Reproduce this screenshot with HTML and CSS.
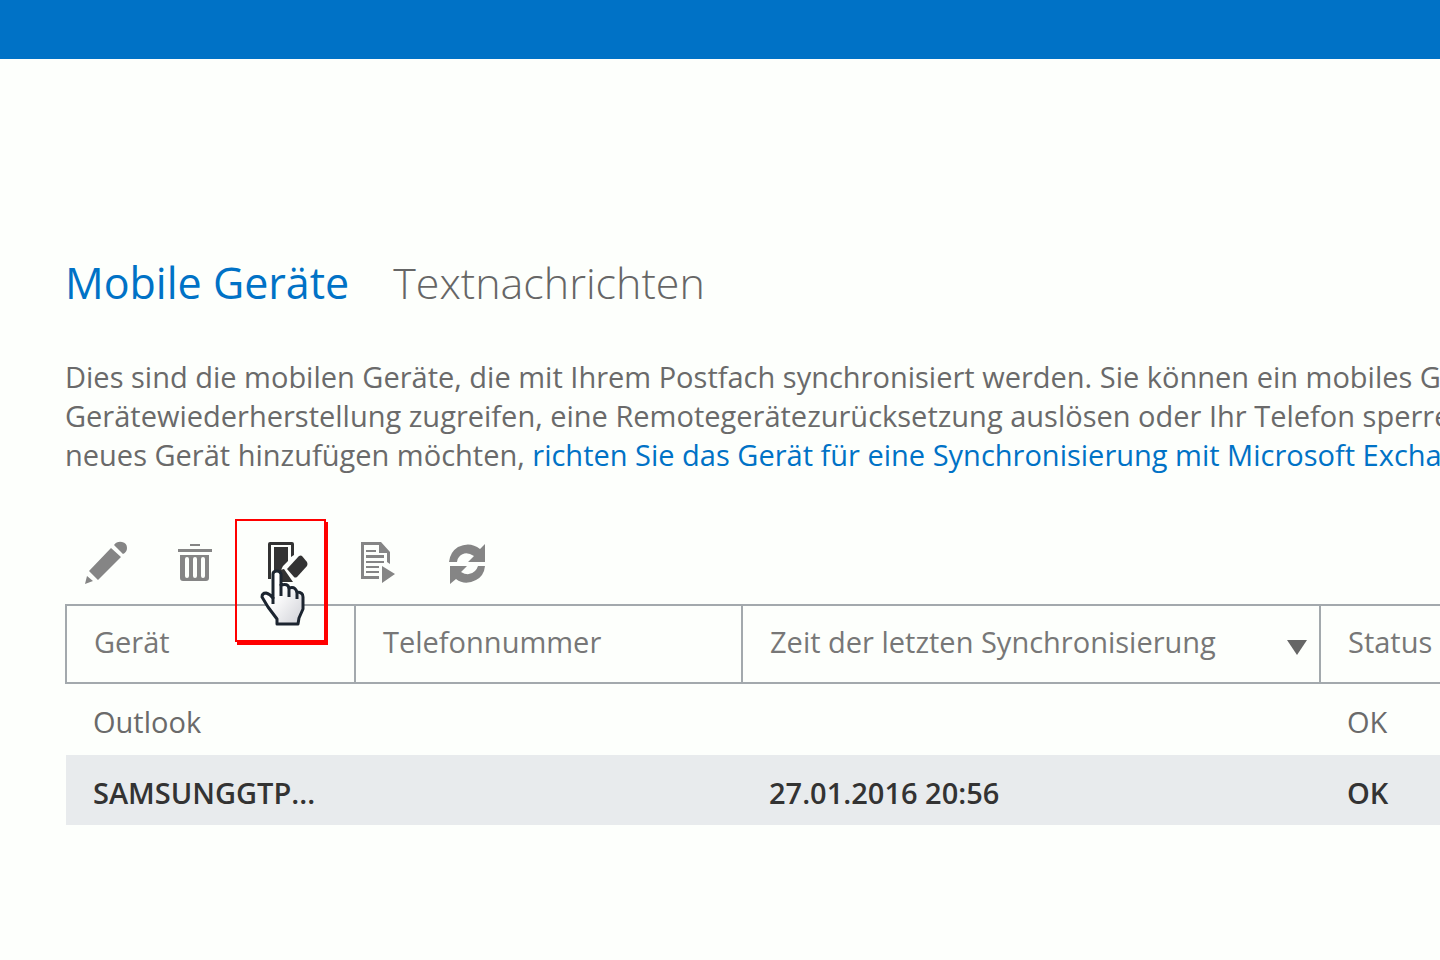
FILE: index.html
```html
<!DOCTYPE html>
<html lang="de">
  <head>
    <meta charset="UTF-8" />
    <meta name="viewport" content="width=device-width, initial-scale=1.0" />
    <title>Mobile Geräte</title>
    <link rel="stylesheet" href="styles.css">
  </head>
  <body>
    <header class="topbar"></header>

    <main class="content">
      <nav class="tabs">
        <a href="#" class="tab active">Mobile Geräte</a>
        <a href="#" class="tab">Textnachrichten</a>
      </nav>

      <p class="intro">
        Dies sind die mobilen Geräte, die mit Ihrem Postfach synchronisiert werden. Sie können ein mobiles G<br>
        Gerätewiederherstellung zugreifen, eine Remotegerätezurücksetzung auslösen oder Ihr Telefon sperren<br>
        neues Gerät hinzufügen möchten, <a href="#">richten Sie das Gerät für eine Synchronisierung mit Microsoft Excha</a>
      </p>

      <div class="toolbar">
        <button class="tool" aria-label="Bearbeiten">
          <svg viewBox="0 0 44 44">
            <path d="M27 7l10 9-23 23-9-9zM30 4q3-4 8-3 5 1 5 6 0 4-4 6zM3 35l6 5-8 3z" />
          </svg>
        </button>
        <button class="tool" aria-label="Löschen">
          <svg viewBox="0 0 44 44">
            <path d="M16 3h10v2H16zM4 8h34v3H4z" />
            <path fill-rule="evenodd" d="M6 14h29v23q0 3-3 3H9q-3 0-3-3zM13 16q-2 0-2 2v17q0 2 2 2t2-2V18q0-2-2-2zM21 16q-2 0-2 2v17q0 2 2 2t2-2V18q0-2-2-2zM29 16q-2 0-2 2v17q0 2 2 2t2-2V18q0-2-2-2z" />
          </svg>
        </button>
        <button class="tool wipe" aria-label="Gerät zurücksetzen">
          <svg viewBox="0 0 44 44">
            <path d="M6 1h22q2 0 2 2v11l-3 2V4H7v34H4V3q0-2 2-2zM10 6h14v14l-5 5-3 6h-6zM16 29l4-1 9 13H16z" />
            <path d="M35 15q2-1 3 0l5 6q1 2 0 4L33 36q-2 1-3 0l-7-8z" />
          </svg>
          <span class="marker"></span>
          <svg class="pointer" viewBox="0 0 46 58">
            <defs>
              <linearGradient id="hand" x1="0" y1="0" x2="1" y2="1">
                <stop offset="40%" stop-color="#fff" />
                <stop offset="100%" stop-color="#cfd0d6" />
              </linearGradient>
            </defs>
            <path fill="url(#hand)" stroke="#1c2530" stroke-width="3" stroke-linejoin="round" d="M13 29V5q0-3 4-3 3 0 4 3v11q7-2 8 3 6-2 8 4 6 0 6 5v12l-4 9-1 6H17v-5L8 38 2 28q0-4 4-4 4 1 7 5z" />
            <path fill="none" stroke="#1c2530" stroke-width="3" d="M21 15v12M29 18v10M37 22v8M13 28v7" />
          </svg>
        </button>
        <button class="tool" aria-label="Protokoll">
          <svg viewBox="0 0 44 44">
            <path fill-rule="evenodd" d="M7 1h20l9 10v12l-3-2v-9h-8V4H10v31h15v3H7z" />
            <path d="M12 9h10v2H12zM12 14h18v3H12zM12 20h18v2H12zM12 25h13v2H12zM12 30h13v2H12zM28 25l13 8-13 9z" />
          </svg>
        </button>
        <button class="tool" aria-label="Aktualisieren">
          <svg viewBox="0 0 44 44">
            <path d="M5 21Q6 11 14 6 26 0 36 8l5-5v18H24l6-6q-9-6-15 1-2 2-2 5zM41 25q-1 10-9 14-11 6-20-1l-6 5V25h17l-6 6q8 5 14-1 2-2 3-5z" />
          </svg>
        </button>
      </div>

      <table class="devices">
        <colgroup>
          <col class="col-device">
          <col class="col-phone">
          <col class="col-sync">
          <col>
        </colgroup>
        <thead>
          <tr>
            <th>Gerät</th>
            <th>Telefonnummer</th>
            <th>
              <div class="sorted">
                Zeit der letzten Synchronisierung
                <svg class="arrow" viewBox="0 0 20 16"><path d="M0 0h20l-10 15z" /></svg>
              </div>
            </th>
            <th>Status</th>
          </tr>
        </thead>
        <tbody>
          <tr>
            <td>Outlook</td>
            <td></td>
            <td></td>
            <td>OK</td>
          </tr>
          <tr class="selected">
            <td>SAMSUNGGTP...</td>
            <td></td>
            <td>27.01.2016 20:56</td>
            <td>OK</td>
          </tr>
        </tbody>
      </table>
    </main>
  </body>
</html>
```
FILE: styles.css
```css
* {
  box-sizing: border-box;
}

body {
  background-color: #fdfffc;
  color: #6a6a6a;
  margin: 0;
  font-family: 'Open Sans', 'Noto Sans', sans-serif;
  font-size: 29px;
}

a {
  color: #0072c6;
  text-decoration: none;
}

.topbar {
  background-color: #0072c6;
  height: 59px;
}

.content {
  padding: 192px 0 0 65px;
}

.tabs {
  display: flex;
  gap: 44px;
  font-size: 43px;
  font-weight: 300;
  line-height: 64px;
}

.tab {
  color: #666;
}

.tab.active {
  color: #0072c6;
  font-weight: 400;
}

.intro {
  line-height: 39px;
  margin: 42px 0 0;
  overflow: hidden;
  white-space: nowrap;
}

.toolbar {
  display: flex;
  gap: 46px;
  padding: 67px 0 19px 19px;
}

.tool {
  position: relative;
  background-color: transparent;
  border: 0;
  cursor: pointer;
  height: 44px;
  padding: 0;
  width: 44px;
}

.tool svg {
  display: block;
  fill: #858585;
}

.wipe svg {
  fill: #333;
}

/* red frame round the wipe button */
.marker {
  position: absolute;
  top: -22px;
  left: -29px;
  border: 2px solid #f00;
  box-shadow: 2px 3px 0 #f00;
  height: 123px;
  width: 91px;
}

.tool .pointer {
  position: absolute;
  top: 28px;
  left: -4px;
  height: 58px;
  width: 46px;
}

.devices {
  border-collapse: collapse;
  table-layout: fixed;
  white-space: nowrap;
  width: 100%;
}

.col-device {
  width: 289px;
}

.col-phone {
  width: 387px;
}

.col-sync {
  width: 578px;
}

th,
td {
  padding: 0 0 0 27px;
  text-align: left;
}

th {
  border: 2px solid #a3a9ad;
  border-right: 0;
  font-weight: 400;
  color: #777;
  height: 78px;
  padding-bottom: 5px;
}

td {
  height: 72px;
  padding-top: 4px;
}

.selected {
  background-color: #e8ebed;
  color: #333;
  font-weight: 600;
}

.selected td {
  height: 70px;
}

.sorted {
  display: flex;
  align-items: flex-end;
  justify-content: space-between;
  padding-right: 12px;
}

.arrow {
  fill: #666;
  height: 16px;
  margin-bottom: 5px;
  width: 20px;
}
```
